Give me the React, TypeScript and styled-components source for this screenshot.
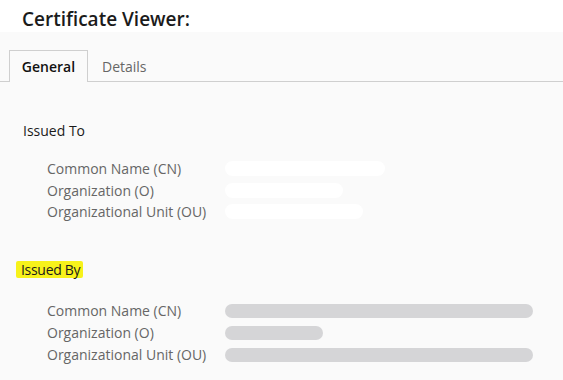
import styled, { createGlobalStyle } from 'styled-components';

const GlobalStyle = createGlobalStyle`
  html, body {
    margin: 0;
    padding: 0;
    background: #fafafa;
    font-family: 'Open Sans', 'Noto Sans', sans-serif;
  }
`;

const Page = styled.div`
  width: 563px;
  height: 380px;
  overflow: hidden;
  background: #fafafa;
`;

const Header = styled.div`
  height: 32px;
  background: #ffffff;
  display: flex;
  align-items: flex-end;
  padding-left: 22px;
`;

const Title = styled.h1`
  margin: 0;
  font-size: 19px;
  font-weight: 600;
  color: #1b1b1b;
  line-height: 28px;
  transform: translateY(1px);
`;

const TabBar = styled.div`
  display: flex;
  margin-top: 18px;
  padding-left: 9px;
  border-bottom: 1px solid #cfcfcf;
  height: 31px;
`;

const Tab = styled.div<{ $active?: boolean }>`
  width: ${(p) => (p.$active ? '79px' : 'auto')};
  padding: ${(p) => (p.$active ? '0' : '0 13px')};
  box-sizing: border-box;
  display: flex;
  align-items: center;
  justify-content: center;
  font-size: 14px;
  font-weight: ${(p) => (p.$active ? 600 : 400)};
  color: ${(p) => (p.$active ? '#111' : '#666')};
  background: #fafafa;
  border: ${(p) => (p.$active ? '1px solid #cfcfcf' : '1px solid transparent')};
  border-bottom: none;
  margin-bottom: ${(p) => (p.$active ? '-1px' : '0')};
  height: ${(p) => (p.$active ? '32px' : '31px')};
`;

const Body = styled.div`
  padding: 37px 0 0 0;
`;

const Section = styled.section`
  margin-bottom: 35px;
`;

const SectionTitle = styled.div<{ $highlight?: boolean }>`
  display: inline-block;
  font-size: 14px;
  color: #1a1a1a;
  line-height: 17px;
  letter-spacing: ${(p) => (p.$highlight ? '-0.3px' : '0')};
  margin-left: ${(p) => (p.$highlight ? '16px' : '23px')};
  padding: ${(p) => (p.$highlight ? '0 3px 0 5px' : '0')};
  background: ${(p) => (p.$highlight ? '#f7f21a' : 'transparent')};
  border-radius: 2px;
`;

const Fields = styled.div<{ $space: number; $row: number }>`
  margin-top: ${(p) => p.$space}px;
  padding-left: 47px;
  display: grid;
  grid-template-columns: 178px 1fr;
  grid-auto-rows: ${(p) => p.$row}px;
  align-items: center;
`;

const Label = styled.div`
  font-size: 14px;
  color: #666;
  white-space: nowrap;
`;

const Redact = styled.div<{ $w: number; $tone: 'white' | 'gray' }>`
  height: ${(p) => (p.$tone === 'white' ? 15 : 14)}px;
  width: ${(p) => p.$w}px;
  border-radius: 8px;
  background: ${(p) => (p.$tone === 'white' ? '#ffffff' : '#d5d5d7')};
`;

interface Field {
  label: string;
  width: number;
}

const issuedTo: Field[] = [
  { label: 'Common Name (CN)', width: 160 },
  { label: 'Organization (O)', width: 118 },
  { label: 'Organizational Unit (OU)', width: 138 },
];

const issuedBy: Field[] = [
  { label: 'Common Name (CN)', width: 308 },
  { label: 'Organization (O)', width: 98 },
  { label: 'Organizational Unit (OU)', width: 308 },
];

interface ListProps {
  fields: Field[];
  tone: 'white' | 'gray';
  space: number;
  row: number;
}

const FieldList = ({ fields, tone, space, row }: ListProps) => (
  <Fields $space={space} $row={row}>
    {fields.map((f) => (
      <>
        <Label key={f.label}>{f.label}</Label>
        <Redact $w={f.width} $tone={tone} />
      </>
    ))}
  </Fields>
);

export default function App() {
  return (
    <Page>
      <GlobalStyle />
      <Header>
        <Title>Certificate Viewer:</Title>
      </Header>
      <TabBar>
        <Tab $active>General</Tab>
        <Tab>Details</Tab>
      </TabBar>
      <Body>
        <Section>
          <SectionTitle>Issued To</SectionTitle>
          <FieldList fields={issuedTo} tone="white" space={17} row={21.5} />
        </Section>
        <Section>
          <SectionTitle $highlight>Issued By</SectionTitle>
          <FieldList fields={issuedBy} tone="gray" space={20} row={22} />
        </Section>
      </Body>
    </Page>
  );
}
